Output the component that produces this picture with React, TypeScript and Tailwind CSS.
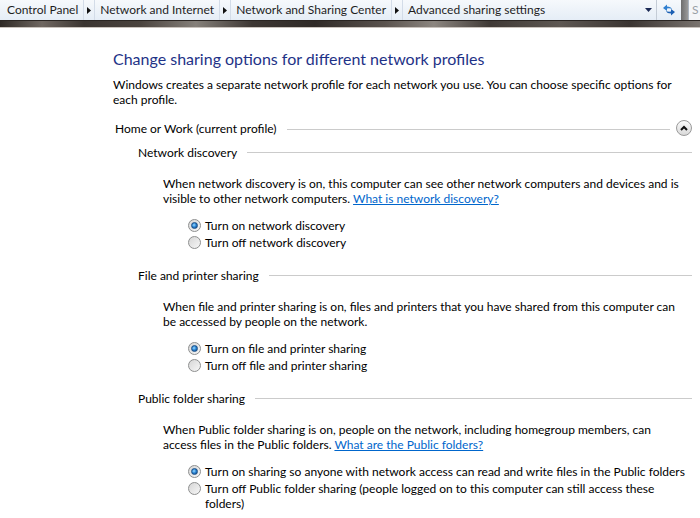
import type { ReactNode } from "react";

const font = { fontFamily: "Lato, 'Liberation Sans', sans-serif" };

function Crumb({ label, arrow = true }: { label: string; arrow?: boolean }) {
  return (
    <div className="flex h-full items-center">
      <span className="px-[5px] whitespace-nowrap">{label}</span>
      {arrow && (
        <span className="flex h-full w-[12px] items-center justify-center border-x border-[#d3dce8]">
          <svg width="4" height="7" viewBox="0 0 4 7">
            <path d="M0 0 L4 3.5 L0 7 Z" fill="#111" />
          </svg>
        </span>
      )}
    </div>
  );
}

function AddressBar() {
  return (
    <div className="flex h-[20px] bg-[linear-gradient(#f6f9fc,#e5edf6)] text-[12px] text-[#1e1e1e]">
      <div className="flex h-full items-center pl-[2px]">
        <Crumb label="Control Panel" />
        <Crumb label="Network and Internet" />
        <Crumb label="Network and Sharing Center" />
        <Crumb label="Advanced sharing settings" arrow={false} />
      </div>
      <div className="flex-1" />
      <div className="flex h-full w-[16px] items-center justify-center">
        <svg width="7" height="4" viewBox="0 0 7 4">
          <path d="M0 0 L7 0 L3.5 4 Z" fill="#1b2a55" />
        </svg>
      </div>
      <div className="flex h-full w-[25px] items-center justify-center border-l border-[#c4ccd6]">
        <svg width="16" height="14" viewBox="0 0 16 14">
          <path d="M2 5 L6 1.5 L6 3.5 Q10 3.5 11 6 Q9 5 6 5.5 L6 8 Z" fill="#2f7fd0" />
          <path d="M14 9 L10 12.5 L10 10.5 Q6 10.5 5 8 Q7 9 10 8.5 L10 6 Z" fill="#1b5fb3" />
        </svg>
      </div>
      <div className="h-full w-[7px] bg-[linear-gradient(to_right,#6d6d6d,#9a9a9a)]" />
      <div className="flex h-full w-[12px] items-center border-l border-[#a9b2bd] bg-[#f4f6f8] pl-[3px] text-[#9aa0a6]">
        S
      </div>
    </div>
  );
}

function FrameStrip() {
  return (
    <div className="h-[8px] border-t border-[#2a2522] border-b border-b-[#c9c3bd] bg-[linear-gradient(to_right,#2e2925_0%,#6f6761_6%,#3b3531_12%,#4a433e_20%,#85807a_28%,#3d3733_36%,#2f2a27_45%,#5a534e_55%,#8c8680_62%,#3f3935_70%,#5e5853_80%,#3a3431_90%,#7a746f_100%)]" />
  );
}

function Rule({ children, indent }: { children: ReactNode; indent: string }) {
  return (
    <div className={`flex items-center ${indent} pr-[8px] leading-[15px]`}>
      <span className="whitespace-nowrap">{children}</span>
      <div className="ml-[10px] h-px flex-1 bg-[#cbcbcb]" />
    </div>
  );
}

function Radio({ checked, children }: { checked?: boolean; children: ReactNode }) {
  return (
    <div className="flex items-start py-[1px] leading-[15px]">
      <span className="mt-[1px] mr-[4px] flex h-[13px] w-[13px] shrink-0 items-center justify-center rounded-full border border-[#8e8f8f] bg-[linear-gradient(135deg,#d6d6d6,#f7f7f7)]">
        {checked && (
          <span className="h-[7px] w-[7px] rounded-full border border-[#1c4f86] bg-[radial-gradient(circle_at_40%_40%,#9fdcff,#2a86d6_45%,#0b3d7a)]" />
        )}
      </span>
      <span>{children}</span>
    </div>
  );
}

function Link({ children }: { children: ReactNode }) {
  return <span className="text-[#0066cc] underline">{children}</span>;
}

export default function App() {
  return (
    <div className="h-[518px] w-[700px] overflow-hidden bg-white text-[12px] text-black" style={font}>
      <AddressBar />
      <FrameStrip />

      <div className="pl-[113px]">
        <h1 className="mt-[20px] text-[16px] leading-[22px] text-[#1e3287]">
          Change sharing options for different network profiles
        </h1>
        <p className="mt-[7px] leading-[15px]">
          Windows creates a separate network profile for each network you use. You can choose specific options for
          <br />
          each profile.
        </p>
      </div>

      <div className="mt-[13px] flex items-center pl-[115px] pr-[8px] leading-[15px]">
        <span className="whitespace-nowrap">Home or Work (current profile)</span>
        <div className="mt-[3px] ml-[10px] h-px flex-1 bg-[#cbcbcb]" />
        <div className="ml-[6px] flex h-[16px] w-[16px] items-center justify-center rounded-full border border-[#9a9a9a] bg-[linear-gradient(#fbfbfb,#d9d9d9)]">
          <svg width="8" height="6" viewBox="0 0 8 6">
            <path d="M1 5 L4 2 L7 5" fill="none" stroke="#111" strokeWidth="2" />
          </svg>
        </div>
      </div>

      <div className="mt-[9px]">
        <Rule indent="pl-[138px]">Network discovery</Rule>
      </div>
      <div className="pl-[163px]">
        <p className="mt-[16px] leading-[15px]">
          When network discovery is on, this computer can see other network computers and devices and is
          <br />
          visible to other network computers. <Link>What is network discovery?</Link>
        </p>
        <div className="mt-[11px] pl-[25px]">
          <Radio checked>Turn on network discovery</Radio>
          <Radio>Turn off network discovery</Radio>
        </div>
      </div>

      <div className="mt-[17px]">
        <Rule indent="pl-[138px]">File and printer sharing</Rule>
      </div>
      <div className="pl-[163px]">
        <p className="mt-[16px] leading-[15px]">
          When file and printer sharing is on, files and printers that you have shared from this computer can
          <br />
          be accessed by people on the network.
        </p>
        <div className="mt-[11px] pl-[25px]">
          <Radio checked>Turn on file and printer sharing</Radio>
          <Radio>Turn off file and printer sharing</Radio>
        </div>
      </div>

      <div className="mt-[17px]">
        <Rule indent="pl-[138px]">Public folder sharing</Rule>
      </div>
      <div className="pl-[163px]">
        <p className="mt-[16px] leading-[15px]">
          When Public folder sharing is on, people on the network, including homegroup members, can
          <br />
          access files in the Public folders. <Link>What are the Public folders?</Link>
        </p>
        <div className="mt-[11px] pl-[25px]">
          <Radio checked>Turn on sharing so anyone with network access can read and write files in the Public folders</Radio>
          <Radio>
            Turn off Public folder sharing (people logged on to this computer can still access these
            <br />
            folders)
          </Radio>
        </div>
      </div>
    </div>
  );
}
